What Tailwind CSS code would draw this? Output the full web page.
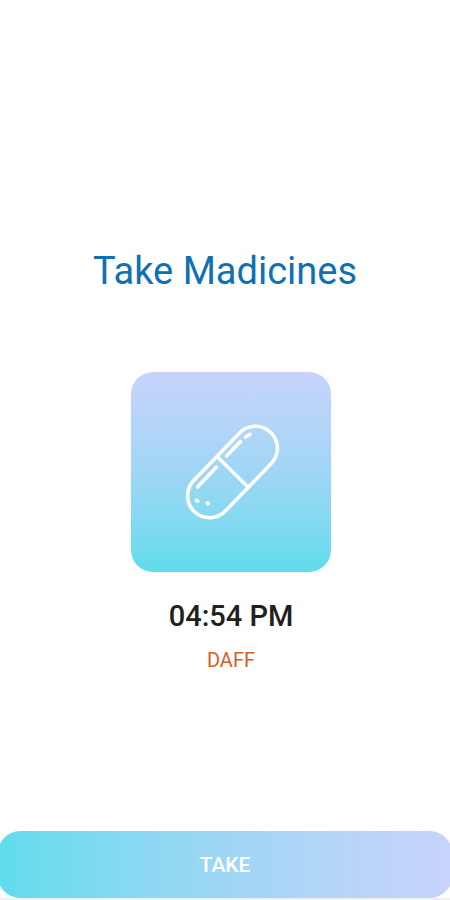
<!DOCTYPE html>
<html lang="en">
<head>
<meta charset="utf-8">
<meta name="viewport" content="width=device-width, initial-scale=1">
<title>Take Madicines</title>
<script src="https://cdn.jsdelivr.net/npm/@tailwindcss/browser@4"></script>
</head>
<body class="bg-white font-[Roboto,sans-serif]">
<div class="flex min-h-screen flex-col overflow-hidden border-b-2 border-[#f1f1f3]">
  <main class="flex grow flex-col items-center pt-[247px]">
    <h1 class="text-[38px] leading-[48px] text-[#0f70b2]">Take Madicines</h1>
    <section class="mt-[77px] flex flex-col items-center pl-3">
      <div class="flex size-[200px] items-center justify-center rounded-[22px] bg-linear-to-b from-[#c8d3fb] via-[#9fd6f5] to-[#5edcec]">
        <svg class="size-[126px]" viewBox="-2 -1 126 126" fill="none" stroke="#fff" stroke-width="3.6" stroke-linecap="round" aria-hidden="true">
          <rect x="-55" y="-22" width="110" height="44" rx="22" transform="translate(62.5 62) rotate(-46)"/>
          <path d="M48 47.5 78.5 77.5"/>
          <path d="M27.5 77 46.5 57M56.5 46 70.5 31.5M75.500 27 80 24.300"/>
          <path d="M26.5 90.5 27.5 91M37.5 93 38 93.5" stroke-width="4"/>
        </svg>
      </div>
      <p class="mt-6 text-[29px] leading-10 font-medium text-[#202020]">04:54 PM</p>
      <p class="mt-2 text-xl leading-8 text-[#d3601f]">DAFF</p>
    </section>
  </main>
  <button type="button" class="-mx-0.5 h-[67px] rounded-[22px] bg-linear-to-r from-[#5edcec] via-[#9fd6f5] to-[#c8d3fb] pt-0.5 text-[21px] font-medium text-white">TAKE</button>
</div>
</body>
</html>
